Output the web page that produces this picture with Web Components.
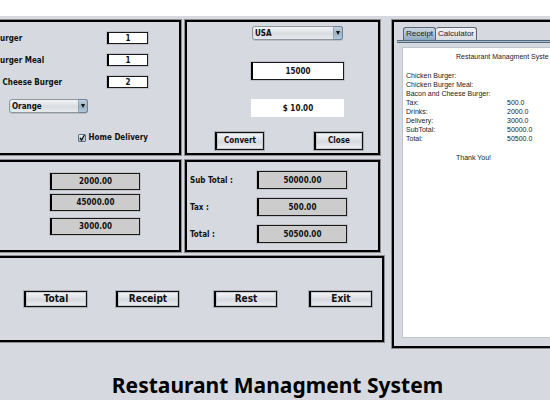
<!DOCTYPE html>
<html lang="en">
<head>
<meta charset="utf-8">
<title>Restaurant Managment System</title>
<style>
  html, body { margin: 0; min-height: 100%; background: #d6d9df; }
  .order { padding: 10px 31px 10px 0; }
  .order ui-field + ui-field { margin-top: 10px; }
  .order ui-combo { width: 79px; margin: 11px 0 19px 9px; }
  .convert { padding: 4px 0 3px; }
  .convert ui-combo { margin: 0 35px 22px 65px; }
  .convert ui-field { margin: 0 34px 19px 64px; }
  .convert ui-field.result { margin-bottom: 15px; }
  .pair { display: flex; justify-content: space-between; padding: 0 15px 0 28px; }
  .pair ui-button { width: 49px; }
  .costs { padding: 11px 39px 15px 0; }
  .costs ui-field { margin-bottom: 4px; }
  .costs ui-field:nth-child(2) { margin-bottom: 7px; }
  .costs ui-field:last-child { margin-bottom: 0; }
  .totals { padding: 9px 31px 7px 3px; }
  .totals ui-field + ui-field { margin-top: 9px; }
  .actions { display: grid; grid-template-columns: 92fr 98fr 95fr 63px; padding: 33px 10px 33px 24px; }
  .actions ui-button { width: 63px; --h: 16px; --size: 10px; }
</style>
</head>
<body>
<restaurant-app>
  <ui-panel slot="order" open-left>
    <div class="order">
      <ui-field label="urger" value="1" style="--w:41px;--h:12px"></ui-field>
      <ui-field label="urger Meal" value="1" style="--w:41px;--h:12px"></ui-field>
      <ui-field label=" Cheese Burger" value="2" style="--w:41px;--h:12px"></ui-field>
      <ui-combo value="Orange" label="Drink"></ui-combo>
      <ui-check>Home Delivery</ui-check>
    </div>
  </ui-panel>
  <ui-panel slot="convert">
    <div class="convert">
      <ui-combo value="USA" label="Currency"></ui-combo>
      <ui-field value="15000" name="Amount" style="--w:100%"></ui-field>
      <ui-field class="result" plain value="$ 10.00" name="Converted amount" style="--w:100%"></ui-field>
      <div class="pair"><ui-button>Convert</ui-button><ui-button>Close</ui-button></div>
    </div>
  </ui-panel>
  <ui-panel slot="costs" open-left>
    <div class="costs">
      <ui-field value="2000.00" name="Cost of drinks" style="--w:90px;--h:17px;--fill:#ccc"></ui-field>
      <ui-field value="45000.00" name="Cost of meals" style="--w:90px;--h:17px;--fill:#ccc"></ui-field>
      <ui-field value="3000.00" name="Cost of delivery" style="--w:90px;--h:17px;--fill:#ccc"></ui-field>
    </div>
  </ui-panel>
  <ui-panel slot="totals">
    <div class="totals">
      <ui-field label="Sub Total :" value="50000.00" style="--w:90px;--fill:#ccc"></ui-field>
      <ui-field label="Tax :" value="500.00" style="--w:90px;--fill:#ccc"></ui-field>
      <ui-field label="Total :" value="50500.00" style="--w:90px;--fill:#ccc"></ui-field>
    </div>
  </ui-panel>
  <ui-panel slot="actions" open-left>
    <div class="actions">
      <ui-button>Total</ui-button><ui-button>Receipt</ui-button><ui-button>Rest</ui-button><ui-button>Exit</ui-button>
    </div>
  </ui-panel>
  <ui-panel slot="side" open-right><receipt-pane></receipt-pane></ui-panel>
  <span slot="title">Restaurant Managment System</span>
</restaurant-app>

<script>
const define = (name, html, setup) => customElements.define(name, class extends HTMLElement {
  connectedCallback() {
    if (this.shadowRoot) return;
    const root = this.attachShadow({ mode: 'open' });
    const t = document.createElement('template');
    t.innerHTML = html;
    root.append(t.content.cloneNode(true));
    if (setup) setup(this, root);
  }
});

define('restaurant-app', `
<style>
  :host { display: block; min-height: 100vh; background: #d6d9df; color: #111;
    font: bold 8px/10px "DejaVu Sans Condensed", "DejaVu Sans", sans-serif; }
  header { height: 16px; background: #fff; }
  main { display: grid; grid-template-columns: 384fr 158fr; gap: 8px; padding-top: 4px; }
  .left { display: flex; flex-direction: column; min-width: 0; }
  .rows { display: grid; grid-template-columns: 181fr 195fr; gap: 5px 4px; margin: 0 4px 4px 0; }
  aside { display: grid; min-width: 0; margin-bottom: -6px; }
  h1 { margin: 31px 0 0; padding-left: 5px; text-align: center; font: bold 21px/24px "Noto Sans", sans-serif; color: #000; }
</style>
<header></header>
<main>
  <div class="left">
    <div class="rows"><slot name="order"></slot><slot name="convert"></slot><slot name="costs"></slot><slot name="totals"></slot></div>
    <slot name="actions"></slot>
  </div>
  <aside><slot name="side"></slot></aside>
</main>
<h1><slot name="title"></slot></h1>`);

define('ui-panel', `
<style>
  :host { display: block; min-width: 0; border: 2px solid #000; box-shadow: 0 0 0 1px #8a8c90; }
  :host([open-left]) { border-left: 0; }
  :host([open-right]) { border-right: 0; }
</style><slot></slot>`);

define('ui-field', `
<style>
  :host { display: flex; align-items: center; justify-content: space-between; height: var(--h, 18px); }
  label { white-space: pre; padding-top: 2px; }
  input { box-sizing: border-box; width: var(--w); height: 100%; margin: 0 0 0 auto; padding: 0;
    border: 1px solid #1a1a1a; border-left: 2px solid #000; border-radius: 0; outline: 0;
    box-shadow: 0 0 0 1px rgba(60,60,60,.15); background: var(--fill, #fff); color: inherit; font: inherit; text-align: center; }
  :host([plain]) input { border-color: #fff; box-shadow: none; }
</style>
<label for="f"></label><input id="f" type="text">`, (el, root) => {
  const label = root.querySelector('label'), input = root.querySelector('input');
  input.value = el.getAttribute('value');
  if (el.hasAttribute('label')) label.textContent = el.getAttribute('label');
  else { label.remove(); input.setAttribute('aria-label', el.getAttribute('name')); }
});

define('ui-combo', `
<style>
  :host { display: grid; height: 14px; }
  select, .arrow { grid-area: 1 / 1; }
  select { appearance: none; box-sizing: border-box; width: 100%; height: 14px; margin: 0; padding: 1px 12px 0 2px;
    border: 1px solid #8e959e; border-radius: 3px; background: linear-gradient(#f3f4f6, #d9dce1 55%, #e6e9ed);
    box-shadow: 0 1px 0 #b9bdc4; color: inherit; font: inherit; outline: 0; }
  .arrow { justify-self: end; display: grid; place-items: center; box-sizing: border-box; width: 10px; height: 14px;
    border: 1px solid #6f8295; border-left-color: #8fa3b6; border-radius: 0 3px 3px 0;
    background: linear-gradient(#c3d2e0, #9bb1c5 50%, #b4c9da); pointer-events: none; }
</style>
<select><option></option></select>
<span class="arrow"><svg width="4" height="4" viewBox="0 0 4 4"><path d="M0 0h4L2 4z" fill="#111"/></svg></span>`, (el, root) => {
  root.querySelector('option').textContent = el.getAttribute('value');
  root.querySelector('select').setAttribute('aria-label', el.getAttribute('label'));
});

define('ui-check', `
<style>
  :host { display: flex; justify-content: flex-end; }
  label { display: flex; align-items: center; gap: 3px; height: 11px; }
  .box { display: grid; }
  .box > * { grid-area: 1 / 1; }
  input { appearance: none; box-sizing: border-box; width: 8px; height: 8px; margin: 0; border: 1px solid #5f7387; border-radius: 1px;
    background: linear-gradient(#e6edf4, #a9bccd); }
  svg { pointer-events: none; }
</style>
<label><span class="box"><input type="checkbox" checked><svg width="8" height="8" viewBox="0 0 8 8"><path d="M2 4l1.5 2L6.5 1" fill="none" stroke="#111" stroke-width="1.3"/></svg></span><slot></slot></label>`);

define('ui-button', `
<style>
  :host { display: block; }
  button { display: grid; place-items: center; box-sizing: border-box; width: 100%; height: var(--h, 18px); margin: 0; padding: 0;
    border: 1px solid #111; border-left: 2px solid #000; border-radius: 0; color: inherit; font: inherit; font-size: var(--size, 8px);
    background: linear-gradient(#f6f7f9, #d6d9df 55%, #eef0f3);
    box-shadow: 0 0 0 1px rgba(40,40,40,.25), inset 0 0 0 1px #c4c8cf; }
</style>
<button type="button"><slot></slot></button>`);

define('receipt-pane', `
<style>
  :host { display: flex; flex-direction: column; box-sizing: border-box; height: 100%; padding: 5px 0 8px 3px;
    color: #222; font: 7px/9px "Liberation Sans", Arial, sans-serif; }
  .tabs { display: flex; padding-left: 6px; }
  .tabs button { box-sizing: border-box; height: 13px; padding: 0; border: 1px solid #5c6672; border-bottom: 0; border-radius: 3px 3px 0 0;
    font: 8px/10px "Liberation Sans", Arial, sans-serif; color: #222; background: linear-gradient(#f0f1f4, #d9dce2); }
  .tabs button:first-child { width: 33px; background: linear-gradient(#cdd9e4, #8fa9c1); }
  .tabs button:last-child { width: 41px; border-left: 0; }
  .bar { height: 1px; border: 1px solid #566a7e; border-right: 0; border-left: 0; background: #a6bccf; }
  .paper { flex: 1; margin: 4px 0 0 5px; padding: 4px 0 0 3px; border: 1px solid #c0c4cc; border-right: 0; background: #fff; white-space: nowrap; }
  p { margin: 0 0 0 50px; }
  table { margin: 10px 0; border-spacing: 0; }
  td { padding: 0; }
  td:first-child { width: 101px; }
</style>
<div class="tabs" role="tablist"><button role="tab" aria-selected="true">Receipt</button><button role="tab">Calculator</button></div>
<div class="bar"></div>
<div class="paper">
  <p>Restaurant Managment Syste</p>
  <table>
    <tr><td>Chicken Burger:</td><td></td></tr>
    <tr><td>Chicken Burger Meal:</td><td></td></tr>
    <tr><td>Bacon and Cheese Burger:</td><td></td></tr>
    <tr><td>Tax:</td><td>500.0</td></tr>
    <tr><td>Drinks:</td><td>2000.0</td></tr>
    <tr><td>Delivery:</td><td>3000.0</td></tr>
    <tr><td>SubTotal:</td><td>50000.0</td></tr>
    <tr><td>Total:</td><td>50500.0</td></tr>
  </table>
  <p>Thank You!</p>
</div>`);
</script>
</body>
</html>
